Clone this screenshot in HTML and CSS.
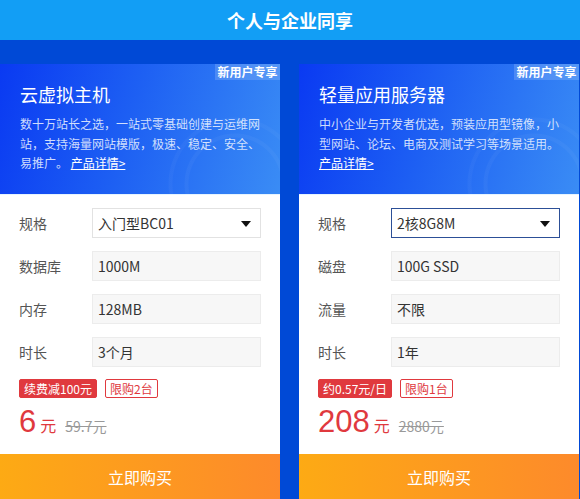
FILE: index.html
```html
<!DOCTYPE html>
<html lang="zh">
<head>
<meta charset="utf-8">
<link rel="stylesheet" href="styles.css">
</head>
<body>
<div class="topbar">个人与企业同享</div>
<div class="main">
  <div class="cards">
    <div class="card">
      <div class="card-head">
        <span class="badge">新用户专享</span>
        <h2 class="card-title">云虚拟主机</h2>
        <p class="card-desc">数十万站长之选，一站式零基础创建与运维网站，支持海量网站模版，极速、稳定、安全、易推广。 <a class="more">产品详情&gt;</a></p>
      </div>
      <div class="card-body">
        <div class="row"><span class="label">规格</span><div class="field select">入门型BC01<span class="caret"></span></div></div>
        <div class="row"><span class="label">数据库</span><div class="field">1000M</div></div>
        <div class="row"><span class="label">内存</span><div class="field">128MB</div></div>
        <div class="row"><span class="label">时长</span><div class="field">3个月</div></div>
        <div class="tags"><span class="tag solid">续费减100元</span><span class="tag line">限购2台</span></div>
        <div class="price"><span class="num">6</span><span class="unit">元</span><span class="old">59.7元</span></div>
      </div>
      <div class="buy">立即购买</div>
    </div>
    <div class="card">
      <div class="card-head">
        <span class="badge">新用户专享</span>
        <h2 class="card-title">轻量应用服务器</h2>
        <p class="card-desc">中小企业与开发者优选，预装应用型镜像，小型网站、论坛、电商及测试学习等场景适用。 <a class="more">产品详情&gt;</a></p>
      </div>
      <div class="card-body">
        <div class="row"><span class="label">规格</span><div class="field select active">2核8G8M<span class="caret"></span></div></div>
        <div class="row"><span class="label">磁盘</span><div class="field">100G SSD</div></div>
        <div class="row"><span class="label">流量</span><div class="field">不限</div></div>
        <div class="row"><span class="label">时长</span><div class="field">1年</div></div>
        <div class="tags"><span class="tag solid">约0.57元/日</span><span class="tag line">限购1台</span></div>
        <div class="price"><span class="num">208</span><span class="unit">元</span><span class="old">2880元</span></div>
      </div>
      <div class="buy">立即购买</div>
    </div>
  </div>
</div>
</body>
</html>
```
FILE: styles.css
```css
* { box-sizing: border-box; }
html, body { margin: 0; padding: 0; }
body {
  width: 580px;
  height: 499px;
  overflow: hidden;
  font-family: "Microsoft YaHei", "Noto Sans CJK SC", "Liberation Sans", sans-serif;
  background: #0049d6;
}
.topbar {
  height: 40px;
  background: #129ef5;
  color: #fff;
  font-size: 18px;
  font-weight: bold;
  text-align: center;
  line-height: 40px;
}
.main {
  padding-top: 24px;
}
.cards {
  display: flex;
  gap: 19px;
}
.card {
  width: 280px;
  flex: none;
  background: #fff;
}
.card-head {
  position: relative;
  height: 130px;
  padding: 12px 20px 0 20px;
  color: #fff;
  overflow: hidden;
  background:
    radial-gradient(circle at 235px 120px, rgba(255,255,255,0) 0 46px, rgba(255,255,255,0.035) 47px 50px, rgba(255,255,255,0) 51px 62px, rgba(255,255,255,0.03) 63px 66px, rgba(255,255,255,0) 67px),
    linear-gradient(105deg, #0a3af2 0%, #1d5ff3 45%, #3a8cf5 100%);
}
.badge {
  position: absolute;
  top: 0;
  right: 0;
  width: 65px;
  height: 16px;
  line-height: 16px;
  text-align: center;
  font-size: 12px;
  font-weight: bold;
  color: #fff;
  background: rgba(255,255,255,0.16);
}
.card-title {
  margin: 6px 0 0 0;
  font-size: 18px;
  font-weight: normal;
  line-height: 24px;
}
.card-desc {
  margin: 8px 0 0 0;
  font-size: 12px;
  line-height: 19.5px;
  color: rgba(235,242,255,0.88);
}
.more {
  color: #fff;
  text-decoration: underline;
}
.card-body {
  padding: 13px 19px 0 19px;
  height: 260px;
  border-top: 1px solid #e6f4ff;
}
.row {
  display: flex;
  align-items: center;
  height: 30px;
  margin-bottom: 13px;
}
.label {
  width: 73px;
  font-size: 14px;
  color: #555;
}
.field {
  position: relative;
  width: 169px;
  height: 30px;
  line-height: 28px;
  padding-left: 5px;
  font-size: 14px;
  color: #333;
  background: #f7f7f7;
  border: 1px solid #ececec;
}
.field.select {
  background: #fff;
  border-color: #e2e2e2;
}
.field.select.active {
  border-color: #2c4f97;
}
.caret {
  position: absolute;
  right: 9px;
  top: 12px;
  width: 0;
  height: 0;
  border-left: 5px solid transparent;
  border-right: 5px solid transparent;
  border-top: 6px solid #111;
}
.tags {
  display: flex;
  gap: 8px;
  margin-top: -1px;
}
.tag {
  height: 19px;
  line-height: 17px;
  padding: 0 4px;
  font-size: 12px;
  border-radius: 2px;
  border: 1px solid #e0393e;
}
.tag.solid {
  background: #e0393e;
  color: #fff;
}
.tag.line {
  color: #e0393e;
  background: #fff;
}
.price {
  display: flex;
  align-items: baseline;
  margin-top: 6px;
  height: 36px;
}
.num {
  font-family: "Liberation Sans", "Noto Sans CJK SC", sans-serif;
  font-size: 31px;
  color: #e0393e;
  line-height: 36px;
}
.unit {
  margin-left: 4px;
  font-size: 16px;
  color: #e0393e;
}
.old {
  margin-left: 9px;
  font-size: 14px;
  color: #999;
  text-decoration: line-through;
}
.buy {
  height: 46px;
  line-height: 46px;
  text-align: center;
  font-size: 16px;
  color: #fff;
  background: linear-gradient(90deg, #fdaa14, #fd8a2b);
}
```
